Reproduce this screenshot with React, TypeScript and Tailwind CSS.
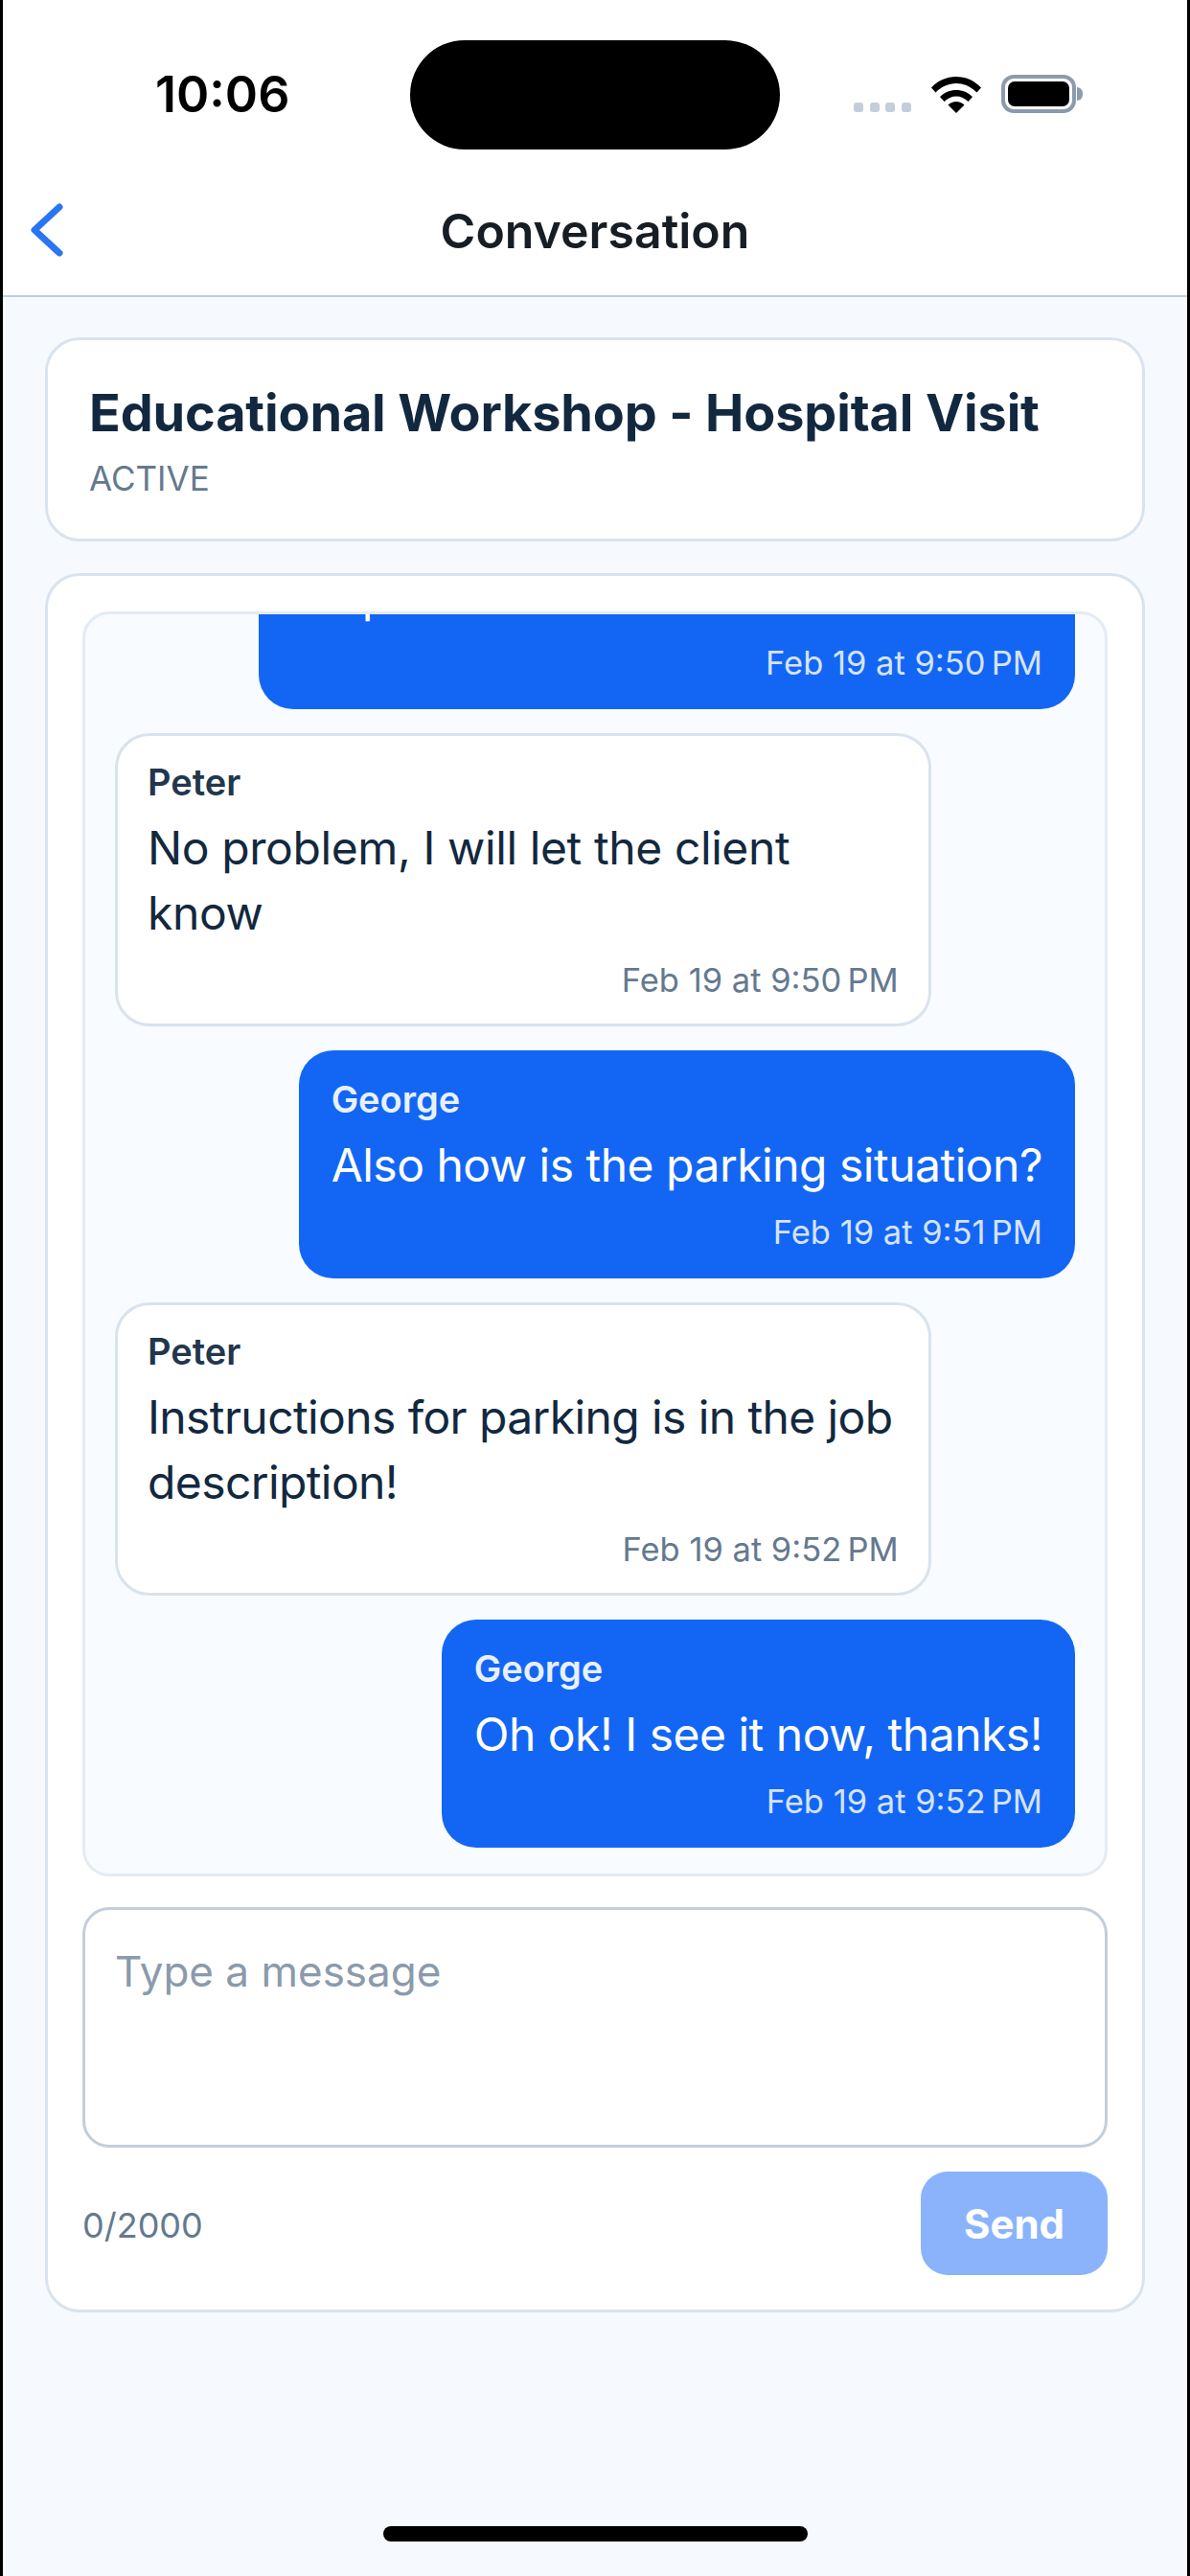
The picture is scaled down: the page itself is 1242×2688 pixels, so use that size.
const font = { fontFamily: 'Inter, "Liberation Sans", sans-serif' }

type Msg = {
  name?: string
  text: string
  time: string
  mine: boolean
  tight?: boolean
}

const messages: Msg[] = [
  { text: 'Can you tell me where we should all meet at the hospital?\nStop at the front', time: 'Feb 19 at 9:50\u202fPM', mine: true },
  { name: 'Peter', text: 'No problem, I will let the client know', time: 'Feb 19 at 9:50\u202fPM', mine: false },
  { name: 'George', text: 'Also how is the parking situation?', time: 'Feb 19 at 9:51\u202fPM', mine: true },
  { name: 'Peter', text: 'Instructions for parking is in the job description!', time: 'Feb 19 at 9:52\u202fPM', mine: false, tight: true },
  { name: 'George', text: 'Oh ok! I see it now, thanks!', time: 'Feb 19 at 9:52\u202fPM', mine: true },
]

function Bubble({ msg }: { msg: Msg }) {
  if (msg.mine) {
    return (
      <div className="shrink-0 self-end max-w-[85%] rounded-[36px] bg-[#1366f3] px-[34px] pt-[27px] pb-[26px]">
        {msg.name && <div className="text-[38px] leading-[48px] font-semibold text-[#e8f0fe]">{msg.name}</div>}
        <div className="text-[48px] leading-[68px] tracking-[-0.5px] whitespace-pre-line text-white mt-[11px]">{msg.text}</div>
        <div className="text-[34.500px] leading-[44px] text-[#d5e3fb] text-right mt-[14px]">{msg.time}</div>
      </div>
    )
  }
  return (
    <div className="shrink-0 self-start max-w-[85%] rounded-[36px] border-[3px] border-[#d9e3ee] bg-white px-[31px] pt-[24px] pb-[23px]">
      <div className="text-[38px] leading-[48px] font-semibold text-[#22364d]">{msg.name}</div>
      <div className={msg.tight ? 'text-[48px] leading-[68px] tracking-[-0.6px] text-[#12283f] mt-[11px]' : 'text-[48px] leading-[68px] tracking-[-0.4px] text-[#12283f] mt-[11px]'}>{msg.text}</div>
      <div className="text-[34.500px] leading-[44px] text-[#64798f] text-right mt-[14px]">{msg.time}</div>
    </div>
  )
}

export default function App() {
  return (
    <div style={font} className="w-[1242px] h-[2688px] flex flex-col bg-[#f6fafe] border-x-[3px] border-black overflow-hidden">
      {/* status bar + nav */}
      <div className="h-[310px] shrink-0 bg-white border-b-[2px] border-[#c3ced9] flex flex-col">
        <div className="h-[155px] flex items-start">
          <div className="w-[425px] pl-[159px] pt-[68px] text-[52px] leading-[62px] font-semibold text-black">10:06</div>
          <div className="mt-[42px] w-[386px] h-[114px] rounded-full bg-black" />
          <div className="flex-1 flex items-start pl-[77px] pt-[76px]">
            <div className="flex gap-[6.500px] mt-[31px]">
              <div className="w-[10px] h-[10px] rounded-[3px] bg-[#c3ceda]" />
              <div className="w-[10px] h-[10px] rounded-[3px] bg-[#c3ceda]" />
              <div className="w-[10px] h-[10px] rounded-[3px] bg-[#c3ceda]" />
              <div className="w-[10px] h-[10px] rounded-[3px] bg-[#c3ceda]" />
            </div>
            <svg className="ml-[21px] mt-[2px]" width="52" height="40" viewBox="0 0 52 40">
              <path d="M0 13.500C7 6 16 2 26 2s19 4 26 11.500l-4.500 5C41.500 12.500 34 9 26 9S10.500 12.500 4.500 18.500z" fill="#000" />
              <path d="M9 23c4.500-4.500 10.500-7 17-7s12.500 2.500 17 7l-4.500 5c-3.500-3.500-8-5.500-12.500-5.500S17 24.500 13.500 28z" fill="#000" />
              <path d="M17.500 31.500c2.200-2.200 5.300-3.500 8.500-3.500s6.300 1.300 8.500 3.500L26 40z" fill="#000" />
            </svg>
            <div className="ml-[21px] mt-[2px] flex items-center">
              <div className="w-[78px] h-[40px] rounded-[13px] border-[4px] border-[#8b9bae] p-[3px]">
                <div className="w-full h-full rounded-[7px] bg-black" />
              </div>
              <div className="ml-[1px] w-[6px] h-[14px] rounded-r-full bg-[#8b9bae]" />
            </div>
          </div>
        </div>
        <div className="flex-1 relative flex items-center justify-center pt-[18px]">
          <svg className="absolute left-[26px] top-[54px]" width="40" height="62" viewBox="0 0 40 62" fill="none">
            <path d="M33 7 7 31l26 24" stroke="#2a75f3" strokeWidth="7" strokeLinecap="round" strokeLinejoin="round" />
          </svg>
          <span className="text-[50px] leading-[62px] font-semibold text-[#171d24]">Conversation</span>
        </div>
      </div>

      {/* content */}
      <div className="flex-1 px-[44px] pt-[42px] flex flex-col gap-[33px]">
        <div className="h-[213px] rounded-[36px] border-[3px] border-[#d9e3ee] bg-white px-[43px] pt-[44px]">
          <div className="text-[54px] leading-[64px] font-bold tracking-[-0.15px] text-[#12283f]">Educational Workshop - Hospital Visit</div>
          <div className="text-[35px] leading-[44px] text-[#64798f] mt-[14px]">ACTIVE</div>
        </div>

        <div className="h-[1815px] rounded-[36px] border-[3px] border-[#d9e3ee] bg-white px-[36px] pt-[37px] flex flex-col">
          <div className="h-[1320px] shrink-0 rounded-[28px] border-[3px] border-[#e4ebf3] bg-[#f8fbff] overflow-hidden px-[31px] pb-[27px] flex flex-col justify-end gap-[25px]">
            {messages.map((m, i) => (
              <Bubble key={i} msg={m} />
            ))}
          </div>

          <div className="mt-[32px] h-[251px] shrink-0 rounded-[28px] border-[3px] border-[#c3ced9] bg-white px-[31px] pt-[34px] text-[44px] leading-[60px] text-[#8b9aab]">
            Type a message
          </div>

          <div className="mt-[25px] flex items-center justify-between">
            <span className="text-[36px] leading-[44px] text-[#64798f] mt-[3px]">0/2000</span>
            <button className="w-[195px] h-[108px] rounded-[28px] bg-[#8ab3fb] text-[42px] font-bold text-white">Send</button>
          </div>
        </div>
      </div>

      {/* home indicator */}
      <div className="h-[52px] shrink-0 flex justify-center">
        <div className="w-[443px] h-[16px] rounded-full bg-black" />
      </div>
    </div>
  )
}
